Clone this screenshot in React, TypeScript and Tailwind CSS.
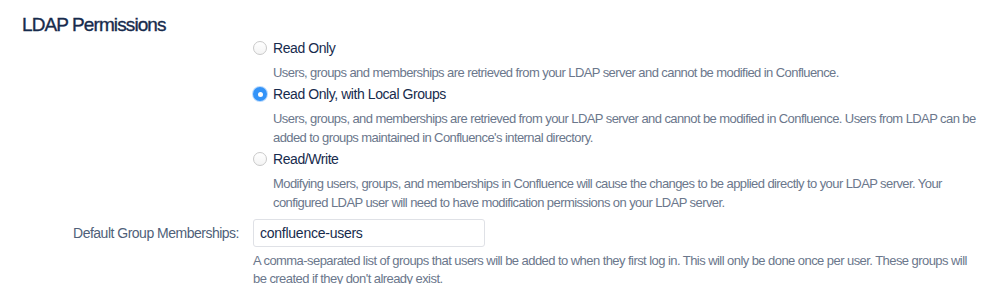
import React from "react";

function Radio({ checked }: { checked?: boolean }) {
  if (checked) {
    return (
      <span className="flex h-[14px] w-[14px] shrink-0 items-center justify-center rounded-full bg-[#3393f8] shadow-[0_0_0_1px_rgba(51,147,248,0.35)]">
        <span className="h-[5px] w-[5px] rounded-full bg-white" />
      </span>
    );
  }
  return (
    <span className="block h-[14px] w-[14px] shrink-0 rounded-full border border-[#c9c9c9] bg-gradient-to-b from-white to-[#f4f4f4]" />
  );
}

function Option({
  label,
  checked,
  lines,
}: {
  label: string;
  checked?: boolean;
  lines: string[];
}) {
  return (
    <div>
      <div className="flex h-[20px] items-center">
        <Radio checked={checked} />
        <span className="ml-[6px] text-[14px] leading-[20px] tracking-[-0.43px] text-[#172b4d]">{label}</span>
      </div>
      <div className="mt-[5px] mb-[2px] pl-[20px] text-[13px] leading-[19px] tracking-[-0.58px] text-[#6b778c]">
        {lines.map((l, i) => (
          <div key={i} className="whitespace-nowrap">
            {l}
          </div>
        ))}
      </div>
    </div>
  );
}

export default function App() {
  return (
    <div
      className="h-[284px] w-[999px] overflow-hidden bg-white pl-[22px] pt-[13px]"
      style={{ fontFamily: '"Liberation Sans", Arial, sans-serif' }}
    >
      <h2 className="text-[19px] font-normal leading-[24px] tracking-[-0.9px] text-[#172b4d] [-webkit-text-stroke:0.35px_#172b4d]">
        LDAP Permissions
      </h2>
      <div className="mt-[1px] grid grid-cols-[217px_1fr] gap-x-[14px]">
        <div />
        <div className="flex flex-col">
          <Option
            label="Read Only"
            lines={[
              "Users, groups and memberships are retrieved from your LDAP server and cannot be modified in Confluence.",
            ]}
          />
          <Option
            label="Read Only, with Local Groups"
            checked
            lines={[
              "Users, groups, and memberships are retrieved from your LDAP server and cannot be modified in Confluence. Users from LDAP can be",
              "added to groups maintained in Confluence's internal directory.",
            ]}
          />
          <Option
            label="Read/Write"
            lines={[
              "Modifying users, groups, and memberships in Confluence will cause the changes to be applied directly to your LDAP server. Your",
              "configured LDAP user will need to have modification permissions on your LDAP server.",
            ]}
          />
        </div>
        <div className="mt-[5px] flex h-[28px] items-center justify-end text-[14px] tracking-[-0.5px] text-[#505f79]">
          Default Group Memberships:
        </div>
        <div className="mt-[5px]">
          <div className="flex h-[28px] w-[232px] items-center rounded-[3px] border border-[#dfe1e6] bg-white px-[6px] text-[14px] tracking-[-0.25px] text-[#172b4d]">
            confluence-users
          </div>
          <div className="mt-[5px] text-[13px] leading-[18px] tracking-[-0.56px] text-[#6b778c]">
            <div className="whitespace-nowrap">
              A comma-separated list of groups that users will be added to when they first log in. This will only be done once per user. These groups will
            </div>
            <div className="whitespace-nowrap">be created if they don't already exist.</div>
          </div>
        </div>
      </div>
    </div>
  );
}
